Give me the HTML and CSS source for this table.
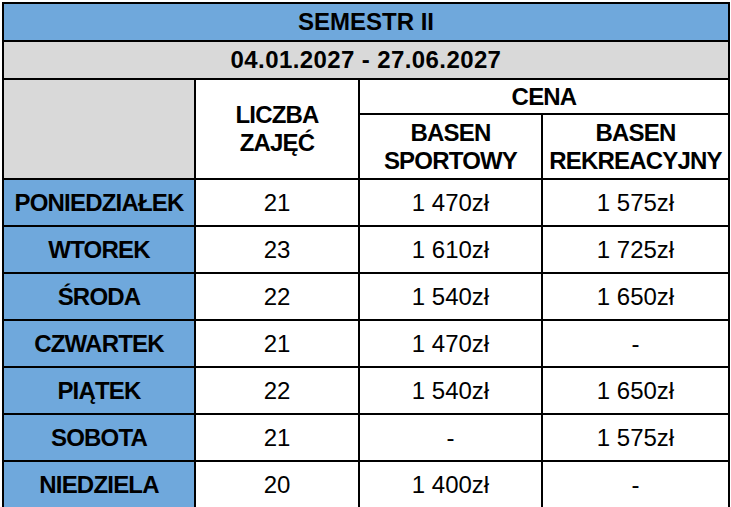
FILE: index.html
```html
<!DOCTYPE html>
<html lang="pl">
<head>
<meta charset="utf-8">
<title>Semestr II</title>
<link rel="stylesheet" href="styles.css">
</head>
<body>
<div class="sheet">
  <div class="cell blue bold span4">SEMESTR II</div>
  <div class="cell gray bold span4 date">04.01.2027 - 27.06.2027</div>
  <div class="cell gray rows2"></div>
  <div class="cell bold tight rows2">LICZBA<br>ZAJĘĆ</div>
  <div class="cell bold tight span2">CENA</div>
  <div class="cell bold tight">BASEN<br>SPORTOWY</div>
  <div class="cell bold tight">BASEN<br>REKREACYJNY</div>

  <div class="cell blue bold tight">PONIEDZIAŁEK</div>
  <div class="cell">21</div>
  <div class="cell">1 470zł</div>
  <div class="cell">1 575zł</div>

  <div class="cell blue bold tight">WTOREK</div>
  <div class="cell">23</div>
  <div class="cell">1 610zł</div>
  <div class="cell">1 725zł</div>

  <div class="cell blue bold tight">ŚRODA</div>
  <div class="cell">22</div>
  <div class="cell">1 540zł</div>
  <div class="cell">1 650zł</div>

  <div class="cell blue bold tight">CZWARTEK</div>
  <div class="cell">21</div>
  <div class="cell">1 470zł</div>
  <div class="cell">-</div>

  <div class="cell blue bold tight">PIĄTEK</div>
  <div class="cell">22</div>
  <div class="cell">1 540zł</div>
  <div class="cell">1 650zł</div>

  <div class="cell blue bold tight">SOBOTA</div>
  <div class="cell">21</div>
  <div class="cell">-</div>
  <div class="cell">1 575zł</div>

  <div class="cell blue bold tight">NIEDZIELA</div>
  <div class="cell">20</div>
  <div class="cell">1 400zł</div>
  <div class="cell">-</div>
</div>
</body>
</html>
```
FILE: styles.css
```css
html, body {
  background: #ffffff;
}
body {
  margin: 2px 0 0 2px;
  font-family: "Liberation Sans", Arial, sans-serif;
  font-size: 24px;
  color: #000000;
}
.sheet {
  display: grid;
  width: 724px;
  grid-template-columns: 190px 162px 181px 185px;
  grid-template-rows: 36px 36px 33px 63px repeat(7, 45px);
  gap: 2px;
  padding: 2px;
  background: #000000;
}
.cell {
  background: #ffffff;
  display: flex;
  align-items: center;
  justify-content: center;
  text-align: center;
  line-height: 28px;
  white-space: nowrap;
}
.bold {
  font-weight: bold;
}
.tight {
  letter-spacing: -0.8px;
}
.date {
  letter-spacing: 0.4px;
}
.blue {
  background: #6fa8dc;
}
.gray {
  background: #d9d9d9;
}
.span4 {
  grid-column: span 4;
}
.span2 {
  grid-column: span 2;
}
.rows2 {
  grid-row: span 2;
}
```
